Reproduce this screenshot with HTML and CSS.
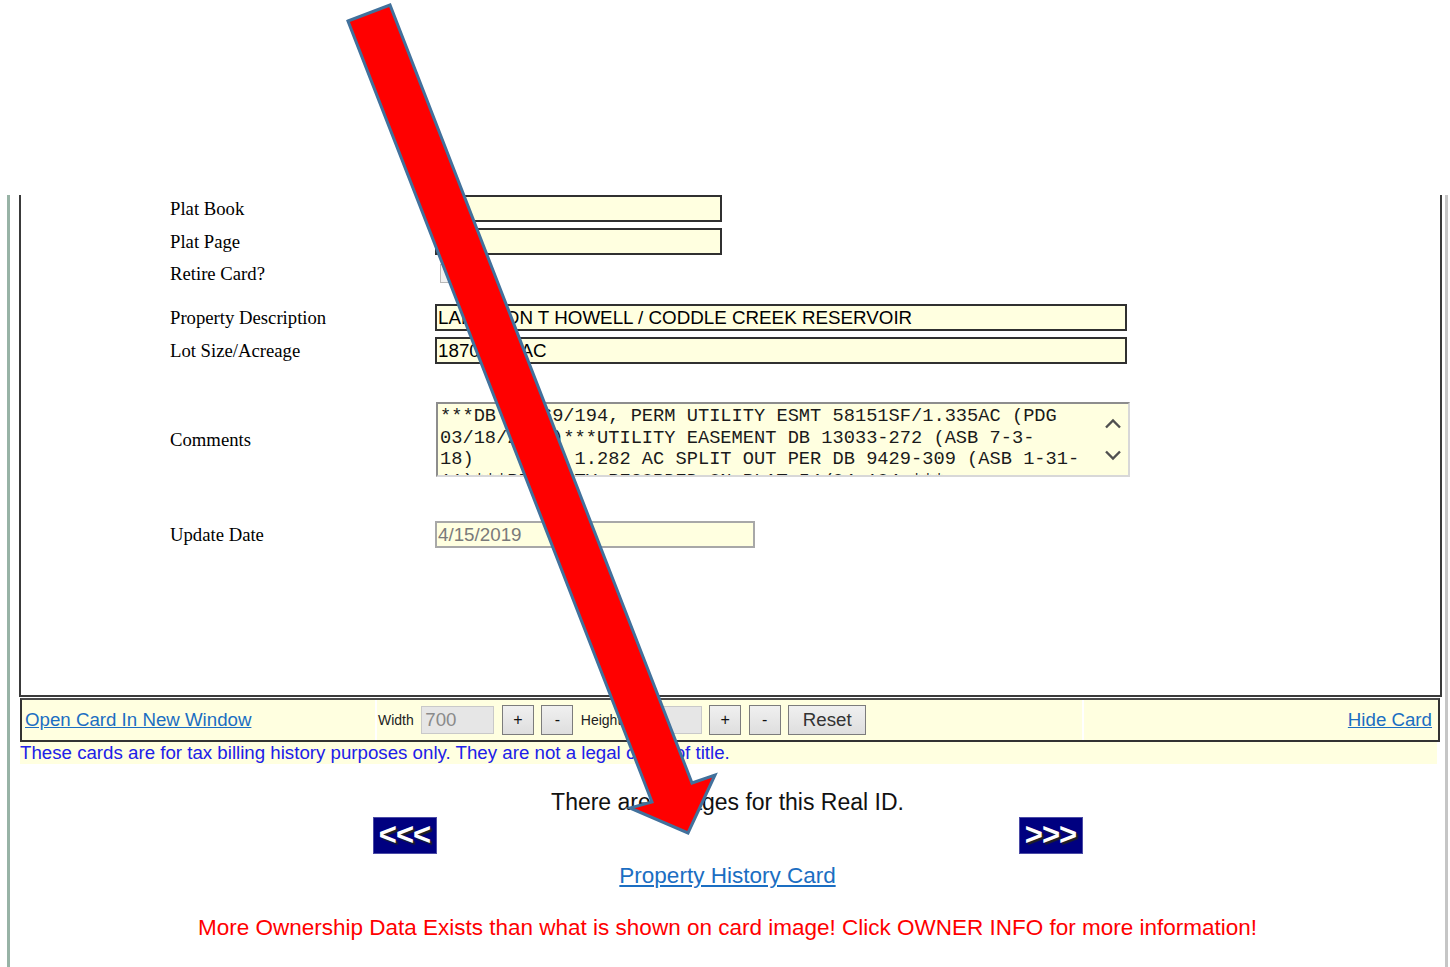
FILE: index.html
```html
<!DOCTYPE html>
<html lang="en">
<head>
<meta charset="utf-8">
<title>Property Card</title>
<link rel="stylesheet" href="styles.css">
</head>
<body>
<div class="sheet">
  <div class="card">
    <div class="form">
      <div class="row r1">
        <span class="lbl">Plat Book</span>
        <input class="field w-plat" type="text" value="" readonly>
      </div>
      <div class="row r2">
        <span class="lbl">Plat Page</span>
        <input class="field w-plat" type="text" value="" readonly>
      </div>
      <div class="row r3">
        <span class="lbl">Retire Card?</span>
        <span class="check"></span>
      </div>
      <div class="row r4">
        <span class="lbl">Property Description</span>
        <input class="field w-wide" type="text" value="LAKE DON T HOWELL / CODDLE CREEK RESERVOIR" readonly>
      </div>
      <div class="row r5">
        <span class="lbl">Lot Size/Acreage</span>
        <input class="field w-wide" type="text" value="1870.334 AC" readonly>
      </div>
      <div class="row r6">
        <span class="lbl">Comments</span>
        <div class="memo">
          <div class="memo-text">***DB 12869/194, PERM UTILITY ESMT 58151SF/1.335AC (PDG
03/18/2019)***UTILITY EASEMENT DB 13033-272 (ASB 7-3-
18)     *** 1.282 AC SPLIT OUT PER DB 9429-309 (ASB 1-31-
11)***PROPERTY RECORDED ON PLAT 54/84,104 ***</div>
          <div class="memo-bar">
            <svg class="chev" width="18" height="11" viewBox="0 0 18 11"><path d="M2 9.5 L9 2.5 L16 9.5"/></svg>
            <svg class="chev" width="18" height="11" viewBox="0 0 18 11"><path d="M2 1.5 L9 8.5 L16 1.5"/></svg>
          </div>
        </div>
      </div>
      <div class="row r7">
        <span class="lbl">Update Date</span>
        <input class="field w-date off" type="text" value="4/15/2019" readonly>
      </div>
    </div>
  </div>

  <div class="bar">
    <div class="cell cell-open"><a class="link" href="#">Open Card In New Window</a></div>
    <div class="cell cell-size">
      <span class="tiny">Width</span>
      <input class="size-in" type="text" value="700" readonly>
      <button class="btn">+</button>
      <button class="btn">-</button>
      <span class="tiny">Height</span>
      <input class="size-in" type="text" value="" readonly>
      <button class="btn">+</button>
      <button class="btn">-</button>
      <button class="btn btn-reset">Reset</button>
    </div>
    <div class="cell cell-hide"><a class="link" href="#">Hide Card</a></div>
  </div>
  <div class="notice">These cards are for tax billing history purposes only. They are not a legal claim of title.</div>

  <div class="pager">
    <p class="count">There are 2 pages for this Real ID.</p>
    <div class="pager-row">
      <a class="navbtn" href="#">&lt;&lt;&lt;</a>
      <a class="navbtn" href="#">&gt;&gt;&gt;</a>
    </div>
  </div>
  <p class="history"><a class="link" href="#">Property History Card</a></p>
  <p class="warning">More Ownership Data Exists than what is shown on card image! Click OWNER INFO for more information!</p>
</div>

<svg class="pointer" width="1450" height="967" viewBox="0 0 1450 967">
  <polygon points="348,21 390,5 692,783 715,775 688,833 630,808 652,802"/>
</svg>
</body>
</html>
```

FILE: styles.css
```css
* { box-sizing: border-box; }

html, body {
  margin: 0;
  padding: 0;
  background: #fff;
  overflow: hidden;
}

body {
  position: relative;
  width: 1450px;
  height: 967px;
  font-family: "Liberation Sans", Arial, sans-serif;
  color: #000;
}

/* outer frame with the two side rules */
.sheet {
  margin: 195px 2px 0 7px;
  height: 772px;
  border-left: 3px solid #98b3a6;
  border-right: 3px solid #c6c6c6;
}

/* the card panel */
.card {
  margin: 0 3px 0 9px;
  height: 502px;
  border: 2px solid #3a3a3a;
  border-top: 0;
  padding-left: 149px;
}

.form {
  display: flex;
  flex-direction: column;
}

.row {
  display: flex;
  align-items: center;
  min-height: 27px;
}
.r2 { margin-top: 6px; }
.r3 { margin-top: 5px; }
.r4 { margin-top: 17px; }
.r5 { margin-top: 6px; }
.r6 { margin-top: 38px; }
.r7 { margin-top: 44px; }

.lbl {
  width: 265px;
  flex: none;
  font-family: "Liberation Serif", "Times New Roman", serif;
  font-size: 18.7px;
}

.field {
  height: 27px;
  margin: 0;
  border: 2px solid #303030;
  background: #ffffe0;
  padding: 0 1px;
  font-family: "Liberation Sans", Arial, sans-serif;
  font-size: 18.8px;
  color: #000;
  outline: none;
}
.w-plat { width: 287px; }
.w-wide { width: 692px; }
.w-date { width: 320px; }
.field.off {
  border-color: #a8a8a8;
  color: #7a7a7a;
}

.check {
  width: 18px;
  height: 19px;
  margin-left: 5px;
  border: 1px solid #b8b8b8;
  background: #f2f2f2;
}

/* comments box with its own scroll rail */
.memo {
  display: flex;
  width: 694px;
  height: 75px;
  margin-left: 1px;
  border: 2px solid;
  border-color: #8d8d8d #d8d8d8 #d8d8d8 #8d8d8d;
  background: #ffffe0;
}
.memo-text {
  flex: 1;
  overflow: hidden;
  padding: 2px 2px 0;
  white-space: pre;
  font-family: "Liberation Mono", "Courier New", monospace;
  font-size: 18.7px;
  line-height: 21.5px;
  color: #1a1a1a;
}
.memo-bar {
  width: 30px;
  flex: none;
  display: flex;
  flex-direction: column;
  justify-content: space-between;
  align-items: center;
  padding: 14px 0 14px;
}
.chev path {
  fill: none;
  stroke: #505050;
  stroke-width: 2.4;
}

/* tool bar under the card */
.bar {
  display: flex;
  gap: 2px;
  height: 44px;
  margin: 1px 5px 0 10px;
  border: 2px solid #333;
  border-top-color: #4a4a4a;
  background: #fff;
}
.cell {
  display: flex;
  align-items: center;
  background: #ffffe0;
}
.cell-open {
  width: 353px;
  padding-left: 3px;
}
.cell-size {
  width: 705px;
  padding-left: 1px;
  gap: 7.5px;
}
.cell-hide {
  flex: 1;
  justify-content: flex-end;
  padding-right: 6px;
}

.link {
  color: #1b6ec2;
  text-decoration: underline;
  font-size: 18.7px;
}

.tiny {
  font-size: 14px;
  color: #222;
}

.size-in {
  width: 73px;
  height: 28px;
  margin: 0;
  padding: 0 3px;
  border: 1px solid #c9c9c9;
  background: #e6e6e6;
  font-family: "Liberation Sans", Arial, sans-serif;
  font-size: 18.7px;
  color: #8a8a8a;
  outline: none;
}

.btn {
  width: 32px;
  height: 30px;
  margin: 0;
  padding: 0;
  border: 1px solid #7c7c7c;
  background: linear-gradient(#f0f0f0, #dedede);
  font-family: "Liberation Sans", Arial, sans-serif;
  font-size: 16px;
  color: #111;
}
.btn-reset {
  width: 78px;
  font-size: 18.7px;
  color: #333;
}

.notice {
  height: 22px;
  margin: 0 8px 0 10px;
  background: #ffffe0;
  color: #2020e8;
  font-size: 18.7px;
  line-height: 22px;
  white-space: nowrap;
}

/* page navigation */
.pager {
  margin-top: 25px;
}
.count {
  margin: 0;
  text-align: center;
  font-size: 23px;
  line-height: 26px;
  color: #111;
}
.pager-row {
  width: 710px;
  margin: 2px auto 0;
  display: flex;
  justify-content: space-between;
}
.navbtn {
  width: 64px;
  height: 37px;
  display: flex;
  align-items: center;
  justify-content: center;
  padding-bottom: 2px;
  background: #000080;
  border: 1px solid #4b4ba6;
  color: #fff;
  font-weight: bold;
  font-size: 31px;
  letter-spacing: -1px;
  text-decoration: none;
  text-shadow: 2px 2px 1px #222;
}

.history {
  margin: 9px 0 0;
  text-align: center;
  font-size: 22.5px;
  line-height: 26px;
}
.history .link { font-size: 22.5px; }

.warning {
  margin: 26px 0 0;
  text-align: center;
  color: #ff0000;
  font-size: 22.5px;
  line-height: 26px;
}

/* red call-out arrow laid over the page */
.pointer {
  position: absolute;
  top: 0;
  left: 0;
  pointer-events: none;
}
.pointer polygon {
  fill: #ff0000;
  stroke: #41719c;
  stroke-width: 3;
  stroke-linejoin: miter;
}
```
